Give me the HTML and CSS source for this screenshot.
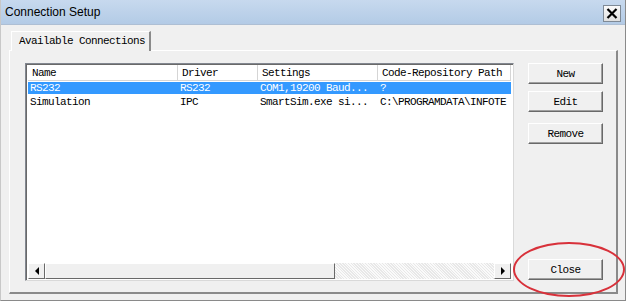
FILE: index.html
```html
<!DOCTYPE html>
<html lang="en">
<head>
  <meta charset="UTF-8">
  <title>Connection Setup</title>
  <link rel="stylesheet" href="styles.css">
</head>
<body>
  <div class="window">
    <div class="titlebar">
      <span class="title">Connection Setup</span>
      <span class="close-x">
        <svg width="12" height="11" viewBox="0 0 12 11"><path d="M1.5 1 L10.5 10 M10.5 1 L1.5 10" stroke="#000" stroke-width="2.2"/></svg>
      </span>
    </div>
    <div class="body">
      <div class="tabs">
        <div class="tab">Available Connections</div>
      </div>
      <div class="panel">
        <div class="list">
          <div class="list-header">
            <div class="col c-name">Name</div>
            <div class="col c-driver">Driver</div>
            <div class="col c-settings">Settings</div>
            <div class="col c-path">Code-Repository Path</div>
          </div>
          <div class="row selected">
            <div class="col c-name">RS232</div>
            <div class="col c-driver">RS232</div>
            <div class="col c-settings">COM1,19200 Baud...</div>
            <div class="col c-path">?</div>
          </div>
          <div class="row">
            <div class="col c-name">Simulation</div>
            <div class="col c-driver">IPC</div>
            <div class="col c-settings">SmartSim.exe si...</div>
            <div class="col c-path">C:\PROGRAMDATA\INFOTE</div>
          </div>
          <div class="list-fill"></div>
          <div class="hscroll">
            <div class="sb-btn"><span class="arrow-left"></span></div>
            <div class="sb-thumb"></div>
            <div class="sb-track"></div>
            <div class="sb-btn"><span class="arrow-right"></span></div>
          </div>
        </div>
        <div class="buttons">
          <button class="btn">New</button>
          <button class="btn btn-edit">Edit</button>
          <button class="btn btn-remove">Remove</button>
          <div class="spacer"></div>
          <div class="close-wrap">
            <button class="btn">Close</button>
            <span class="mark"></span>
          </div>
        </div>
      </div>
    </div>
  </div>
</body>
</html>
```

FILE: styles.css
```css
body {
    margin: 0;
    padding: 0;
    background-color: #f0f0f0;
}

.window {
    width: 626px;
    height: 301px;
    box-sizing: border-box;
    background-color: #f0f0f0;
    border-left: 1px solid #c8c8c8;
    border-right: 1px solid #8a8a8a;
    border-bottom: 1px solid #8a8a8a;
    display: flex;
    flex-direction: column;
    overflow: hidden;
}

.titlebar {
    height: 24px;
    flex: none;
    display: flex;
    align-items: center;
    justify-content: space-between;
    padding: 0 4px 0 4px;
    background: linear-gradient(to bottom, #c7d9ee, #b3cbe6);
    border-bottom: 1px solid #aebfd4;
}

.title {
    font-family: "Liberation Sans", Arial, sans-serif;
    font-size: 12px;
    color: #000;
}

.close-x {
    width: 18px;
    height: 17px;
    box-sizing: border-box;
    border: 1px solid #7f8a96;
    background: linear-gradient(to bottom, #fafafa, #e0e0e0);
    display: flex;
    align-items: center;
    justify-content: center;
    margin-top: 2px;
}

.body {
    flex: 1;
    display: flex;
    flex-direction: column;
    padding: 5px 8px 0 8px;
    font-family: "Liberation Mono", "Courier New", monospace;
    font-size: 11px;
    letter-spacing: -0.6px;
    color: #000;
}

.tabs {
    display: flex;
    padding-left: 2px;
    height: 20px;
}

.tab {
    width: 140px;
    box-sizing: border-box;
    padding: 3px 0 0 7px;
    border-top: 1px solid #fff;
    border-left: 1px solid #fff;
    border-right: 2px solid #8a8a8a;
    background-color: #f0f0f0;
    position: relative;
    top: 1px;
}

.panel {
    height: 244px;
    box-sizing: border-box;
    width: 609px;
    border-top: 1px solid #fff;
    border-left: 1px solid #fff;
    border-right: 2px solid #8a8a8a;
    border-bottom: 2px solid #8a8a8a;
    display: flex;
    padding: 12px 0 11px 15px;
    gap: 14px;
}

.list {
    width: 489px;
    box-sizing: border-box;
    background-color: #fff;
    border: 1px solid #828790;
    border-right-color: #d9d9d9;
    border-bottom-color: #d9d9d9;
    box-shadow: inset 1px 1px 0 #696969;
    display: flex;
    flex-direction: column;
    padding: 1px 2px 1px 2px;
}

.list-header {
    display: flex;
    height: 15px;
    border-bottom: 1px solid #d5d5d5;
}

.list-header .col {
    border-right: 1px solid #d5d5d5;
    padding-top: 2px;
}

.col {
    white-space: nowrap;
    overflow: hidden;
    box-sizing: border-box;
    padding-left: 4px;
}

.c-name { width: 150px; }
.c-driver { width: 80px; }
.c-settings { width: 120px; }
.c-path { width: 133px; }

.row {
    display: flex;
    height: 14px;
    line-height: 14px;
}

.row.selected {
    background-color: #3399ff;
    color: #fff;
    margin-top: 1px;
    height: 12px;
    line-height: 12px;
    margin-bottom: 1px;
}

.row .col {
    padding-left: 2px;
}

.list-fill {
    flex: 1;
}

.hscroll {
    display: flex;
    height: 16px;
    background-color: #f0f0f0;
}

.sb-btn {
    width: 17px;
    box-sizing: border-box;
    border-top: 1px solid #fff;
    border-left: 1px solid #fff;
    border-right: 1px solid #696969;
    border-bottom: 1px solid #696969;
    background-color: #f0f0f0;
    display: flex;
    align-items: center;
    justify-content: center;
}

.arrow-left {
    width: 0;
    height: 0;
    border-top: 4px solid transparent;
    border-bottom: 4px solid transparent;
    border-right: 4px solid #000;
}

.arrow-right {
    width: 0;
    height: 0;
    border-top: 4px solid transparent;
    border-bottom: 4px solid transparent;
    border-left: 4px solid #000;
}

.sb-thumb {
    width: 290px;
    box-sizing: border-box;
    border-top: 1px solid #fff;
    border-left: 1px solid #fff;
    border-right: 1px solid #696969;
    border-bottom: 1px solid #696969;
    background-color: #f0f0f0;
}

.sb-track {
    flex: 1;
    background-color: #f4f4f4;
    background-image: repeating-linear-gradient(45deg, #e8e8e8 0 1px, #fafafa 1px 2px);
}

.buttons {
    width: 75px;
    display: flex;
    flex-direction: column;
    padding-bottom: 1px;
}

.btn {
    width: 75px;
    height: 21px;
    box-sizing: border-box;
    font-family: "Liberation Mono", "Courier New", monospace;
    font-size: 11px;
    letter-spacing: -0.6px;
    color: #000;
    background-color: #f0f0f0;
    border: 1px solid;
    border-color: #fff #696969 #696969 #fff;
    box-shadow: inset -1px -1px 0 #a0a0a0;
    padding: 0;
    margin: 0;
}

.btn-edit {
    margin-top: 7px;
}

.btn-remove {
    margin-top: 11px;
}

.spacer {
    flex: 1;
}

.close-wrap {
    position: relative;
}

.mark {
    position: absolute;
    left: -15px;
    top: -17px;
    width: 112px;
    height: 55px;
    box-sizing: border-box;
    border: 2px solid #d8313a;
    border-radius: 50%;
    pointer-events: none;
}
```
